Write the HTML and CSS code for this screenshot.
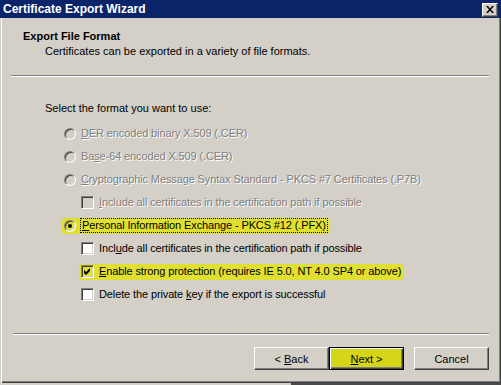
FILE: index.html
```html
<!DOCTYPE html>
<html lang="en">
<head>
  <meta charset="UTF-8" />
  <title>Certificate Export Wizard</title>
  <link rel="stylesheet" href="styles.css">
</head>
<body>

  <div class="window">
    <div class="titlebar">
      <span class="title">Certificate Export Wizard</span>
      <button class="close">
        <svg width="8" height="7" viewBox="0 0 8 7"><path d="M0 0h2l2 2.5L6 0h2L5 3.5 8 7H6L4 4.5 2 7H0l3-3.5z" fill="#000"/></svg>
      </button>
    </div>

    <div class="header">
      <div class="header-title">Export File Format</div>
      <div class="header-sub">Certificates can be exported in a variety of file formats.</div>
    </div>
    <div class="rule"></div>

    <div class="content">
      <div class="prompt">Select the format you want to use:</div>

      <div class="option disabled">
        <span class="radio"></span>
        <span class="label"><u>D</u>ER encoded binary X.509 (.CER)</span>
      </div>
      <div class="option disabled">
        <span class="radio"></span>
        <span class="label">Ba<u>s</u>e-64 encoded X.509 (.CER)</span>
      </div>
      <div class="option disabled">
        <span class="radio"></span>
        <span class="label"><u>C</u>ryptographic Message Syntax Standard - PKCS #7 Certificates (.P7B)</span>
      </div>
      <div class="option sub disabled">
        <span class="check"></span>
        <span class="label"><u>I</u>nclude all certificates in the certification path if possible</span>
      </div>

      <div class="option">
        <span class="hl">
          <span class="radio on"></span>
          <span class="label focus"><u>P</u>ersonal Information Exchange - PKCS #12 (.PFX)</span>
        </span>
      </div>
      <div class="option sub">
        <span class="check"></span>
        <span class="label">Incl<u>u</u>de all certificates in the certification path if possible</span>
      </div>
      <div class="option sub">
        <span class="hl">
          <span class="check on">
            <svg width="7" height="7" viewBox="0 0 7 7"><path d="M0 2l2 2 4-4v3L2 7 0 5z" fill="#000"/></svg>
          </span>
          <span class="label"><u>E</u>nable strong protection (requires IE 5.0, NT 4.0 SP4 or above)</span>
        </span>
      </div>
      <div class="option sub">
        <span class="check"></span>
        <span class="label">Delete the private <u>k</u>ey if the export is successful</span>
      </div>
    </div>

    <div class="rule bottom"></div>
    <div class="footer">
      <button class="btn">&lt; <u>B</u>ack</button>
      <button class="btn default"><u>N</u>ext &gt;</button>
      <button class="btn cancel">Cancel</button>
    </div>
  </div>

  <div class="desk"><div class="taskbar"></div></div>

</body>
</html>
```

FILE: styles.css
```css
body {
  margin: 0;
  background: #d4d0c8;
  font-family: 'Liberation Sans', Arial, sans-serif;
  font-size: 11px;
  color: #000;
}

.window {
  box-sizing: border-box;
  height: 383px;
  display: flex;
  flex-direction: column;
  background: #d4d0c8;
  box-shadow: inset 1px 0 #d4d0c8, inset 2px 0 #fff, inset -1px -1px #404040, inset -2px -2px #808080;
}

.titlebar {
  height: 18px;
  flex-shrink: 0;
  background: #0a246a;
  display: flex;
  align-items: center;
  justify-content: space-between;
  padding: 0 3px 0 3px;
}

.title {
  color: #fff;
  font-weight: 700;
  font-size: 12px;
}

.close {
  width: 16px;
  height: 14px;
  padding: 0;
  margin-top: 1px;
  background: #d4d0c8;
  border: 1px solid;
  border-color: #fff #404040 #404040 #fff;
  box-shadow: inset -1px -1px #808080;
  display: flex;
  align-items: center;
  justify-content: center;
}

.header {
  box-sizing: border-box;
  height: 57px;
  padding: 11px 0 0 23px;
  line-height: 14px;
}

.header-title {
  font-weight: 700;
}

.header-sub {
  margin-top: 1px;
  padding-left: 22px;
}

.rule {
  flex-shrink: 0;
  margin: 0 12px 0 11px;
  border-top: 1px solid #808080;
  border-bottom: 1px solid #fff;
}

.rule.bottom {
  margin-left: 13px;
}

.content {
  box-sizing: border-box;
  height: 256px;
  padding: 24px 0 0 45px;
}

.prompt {
  line-height: 14px;
  margin-bottom: 7px;
}

.option {
  height: 23px;
  display: flex;
  align-items: center;
  padding-left: 19px;
}

.option.sub {
  padding-left: 36px;
}

.option .label {
  margin-left: 5px;
  line-height: 13px;
  letter-spacing: -0.12px;
}

.disabled .label {
  color: #808080;
  text-shadow: 1px 1px 0 #fff;
}

.hl {
  display: flex;
  align-items: center;
  height: 16px;
  margin-left: -2px;
  padding: 0 2px;
  background: #e0e030;
  border-radius: 3px;
}

.radio {
  box-sizing: border-box;
  width: 12px;
  height: 12px;
  border-radius: 50%;
  border: 1px solid;
  border-color: #808080 #fff #fff #808080;
  box-shadow: inset 1px 1px #404040, inset -1px -1px #d4d0c8;
  background: #fff;
  display: flex;
  align-items: center;
  justify-content: center;
}

.disabled .radio {
  background: #d4d0c8;
}

.radio.on {
  background: #e0e030;
}

.radio.on::after {
  content: '';
  width: 4px;
  height: 4px;
  border-radius: 50%;
  background: #000;
}

.check {
  box-sizing: border-box;
  width: 13px;
  height: 13px;
  border: 1px solid;
  border-color: #808080 #fff #fff #808080;
  box-shadow: inset 1px 1px #404040, inset -1px -1px #d4d0c8;
  background: #fff;
  display: flex;
  align-items: center;
  justify-content: center;
}

.disabled .check {
  background: #d4d0c8;
}

.check.on {
  background: #e0e030;
}

.focus {
  outline: 1px dotted #000;
  outline-offset: 0;
  padding: 0 1px;
  margin-left: 4px;
}

.footer {
  height: 46px;
  display: flex;
  justify-content: flex-end;
  padding: 12px 12px 0 0;
  box-sizing: border-box;
}

.btn {
  box-sizing: border-box;
  width: 75px;
  height: 23px;
  padding: 0;
  font-family: 'Liberation Sans', Arial, sans-serif;
  font-size: 11px;
  color: #000;
  background: #d4d0c8;
  border: 1px solid;
  border-color: #fff #404040 #404040 #fff;
  box-shadow: inset -1px -1px #808080;
}

.btn.default {
  border-color: #000;
  background: #d6d618;
  box-shadow: inset 1px 1px #fff, inset -1px -1px #404040, inset -2px -2px #808080;
}

.btn.cancel {
  margin-left: 10px;
}

.desk {
  height: 2px;
}

.taskbar {
  margin-left: 291px;
  height: 100%;
  background: #4a4a4a;
}
```
